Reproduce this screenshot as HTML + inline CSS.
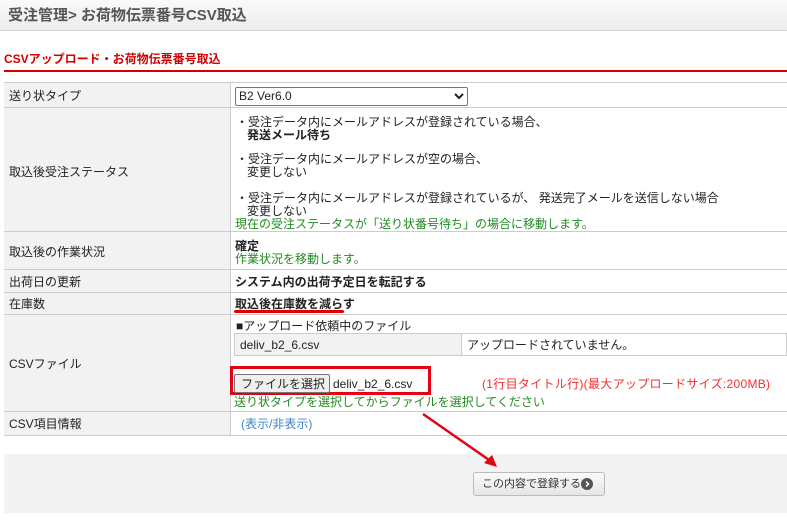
<!DOCTYPE html>
<html><head><meta charset="utf-8"><style>
*{margin:0;padding:0;box-sizing:border-box}
body{width:787px;height:526px;background:#fff;font-family:"Liberation Sans","Noto Sans CJK JP",sans-serif;font-size:12px;color:#222;position:relative;overflow:hidden}
.a{position:absolute;white-space:nowrap;line-height:14px}
.hd{position:absolute;left:0;top:0;width:787px;height:31px;background:linear-gradient(#fafafa,#ececec);border-bottom:1px solid #d4d4d4}
.l{position:absolute;left:4px;width:226px;background:#f2f2f2;border-bottom:1px solid #ccc}
.r{position:absolute;left:230px;width:557px;border-bottom:1px solid #ccc;border-left:1px solid #ccc}
.g{color:#228b22}
b{font-weight:bold}
</style></head><body>
<div class="hd"></div>
<div class="a" style="left:8px;top:7px;font-size:15px;font-weight:bold;color:#555;line-height:17px">受注管理&gt; お荷物伝票番号CSV取込</div>
<div class="a" style="left:4px;top:52px;font-size:12px;font-weight:bold;color:#d40000">CSVアップロード・お荷物伝票番号取込</div>
<div style="position:absolute;left:4px;top:70px;width:783px;height:2px;background:#d40000"></div>
<div style="position:absolute;left:4px;top:82px;width:783px;height:1px;background:#ccc"></div>

<div class="l" style="top:83px;height:25px"></div><div class="r" style="top:83px;height:25px"></div>
<div class="l" style="top:108px;height:124px"></div><div class="r" style="top:108px;height:124px"></div>
<div class="l" style="top:232px;height:38px"></div><div class="r" style="top:232px;height:38px"></div>
<div class="l" style="top:270px;height:23px"></div><div class="r" style="top:270px;height:23px"></div>
<div class="l" style="top:293px;height:22px"></div><div class="r" style="top:293px;height:22px"></div>
<div class="l" style="top:315px;height:97px"></div><div class="r" style="top:315px;height:97px"></div>
<div class="l" style="top:412px;height:24px"></div><div class="r" style="top:412px;height:24px"></div>

<div class="a" style="left:9px;top:89px">送り状タイプ</div>
<div style="position:absolute;left:235px;top:87px;width:233px;height:19px;border:1px solid #767676;border-radius:2px;background:#fff"></div>
<div class="a" style="left:239px;top:89px">B2 Ver6.0</div>
<svg style="position:absolute;left:454px;top:93px" width="10" height="7"><path d="M1 1 L5 5 L9 1" stroke="#222" stroke-width="2" fill="none"/></svg>

<div class="a" style="left:9px;top:165px">取込後受注ステータス</div>
<div class="a" style="left:236px;top:115px">・受注データ内にメールアドレスが登録されている場合、</div>
<div class="a" style="left:247px;top:128px"><b>発送メール待ち</b></div>
<div class="a" style="left:236px;top:152px">・受注データ内にメールアドレスが空の場合、</div>
<div class="a" style="left:247px;top:165px">変更しない</div>
<div class="a" style="left:236px;top:191px">・受注データ内にメールアドレスが登録されているが、 発送完了メールを送信しない場合</div>
<div class="a" style="left:247px;top:204px">変更しない</div>
<div class="a g" style="left:235px;top:217px">現在の受注ステータスが「送り状番号待ち」の場合に移動します。</div>

<div class="a" style="left:9px;top:245px">取込後の作業状況</div>
<div class="a" style="left:235px;top:239px"><b>確定</b></div>
<div class="a g" style="left:235px;top:252px">作業状況を移動します。</div>

<div class="a" style="left:9px;top:275px">出荷日の更新</div>
<div class="a" style="left:235px;top:275px"><b>システム内の出荷予定日を転記する</b></div>

<div class="a" style="left:9px;top:297px">在庫数</div>
<div class="a" style="left:235px;top:297px"><b>取込後在庫数を減らす</b></div>
<div style="position:absolute;left:234px;top:310px;width:110px;height:3px;border-radius:2px;background:#e00000"></div>

<div class="a" style="left:9px;top:357px">CSVファイル</div>
<div class="a" style="left:236px;top:319px">■アップロード依頼中のファイル</div>
<div style="position:absolute;left:234px;top:333px;width:553px;height:23px;border:1px solid #ccc;background:#fff"></div>
<div style="position:absolute;left:235px;top:334px;width:227px;height:21px;background:#f2f2f2;border-right:1px solid #ccc"></div>
<div class="a" style="left:240px;top:338px">deliv_b2_6.csv</div>
<div class="a" style="left:467px;top:338px">アップロードされていません。</div>
<div style="position:absolute;left:230px;top:366px;width:201px;height:29px;border:3px solid #e60012"></div>
<div style="position:absolute;left:234px;top:374px;width:96px;height:19px;border:1px solid #767676;border-radius:2px;background:#efefef"></div>
<div class="a" style="left:241px;top:377px">ファイルを選択</div>
<div class="a" style="left:333px;top:377px">deliv_b2_6.csv</div>
<div class="a" style="left:482px;top:377px;color:#f03030;letter-spacing:0.3px">(1行目タイトル行)(最大アップロードサイズ:200MB)</div>
<div class="a g" style="left:234px;top:395px">送り状タイプを選択してからファイルを選択してください</div>

<div class="a" style="left:9px;top:417px">CSV項目情報</div>
<div class="a" style="left:241px;top:417px;color:#3a84c9">(表示/非表示)</div>

<div style="position:absolute;left:4px;top:454px;width:783px;height:59px;background:#f3f3f3"></div>
<div style="position:absolute;left:473px;top:472px;width:132px;height:24px;border:1px solid #bbb;border-radius:3px;background:linear-gradient(#fafafa,#e6e6e6)"></div>
<div class="a" style="left:482px;top:477px;font-size:11px;color:#333">この内容で登録する</div>
<div style="position:absolute;left:581px;top:478px;width:12px;height:12px;border-radius:50%;background:#555"></div>
<svg style="position:absolute;left:581px;top:478px" width="12" height="12"><path d="M5 3.5 L7.5 6 L5 8.5" stroke="#fff" stroke-width="1.5" fill="none"/></svg>

<svg style="position:absolute;left:0;top:0" width="787" height="526"><path d="M423 414 L492 462" stroke="#e60012" stroke-width="2.5"/><path d="M497 467 L484 463 L492 455 Z" fill="#e60012"/></svg>
</body></html>
